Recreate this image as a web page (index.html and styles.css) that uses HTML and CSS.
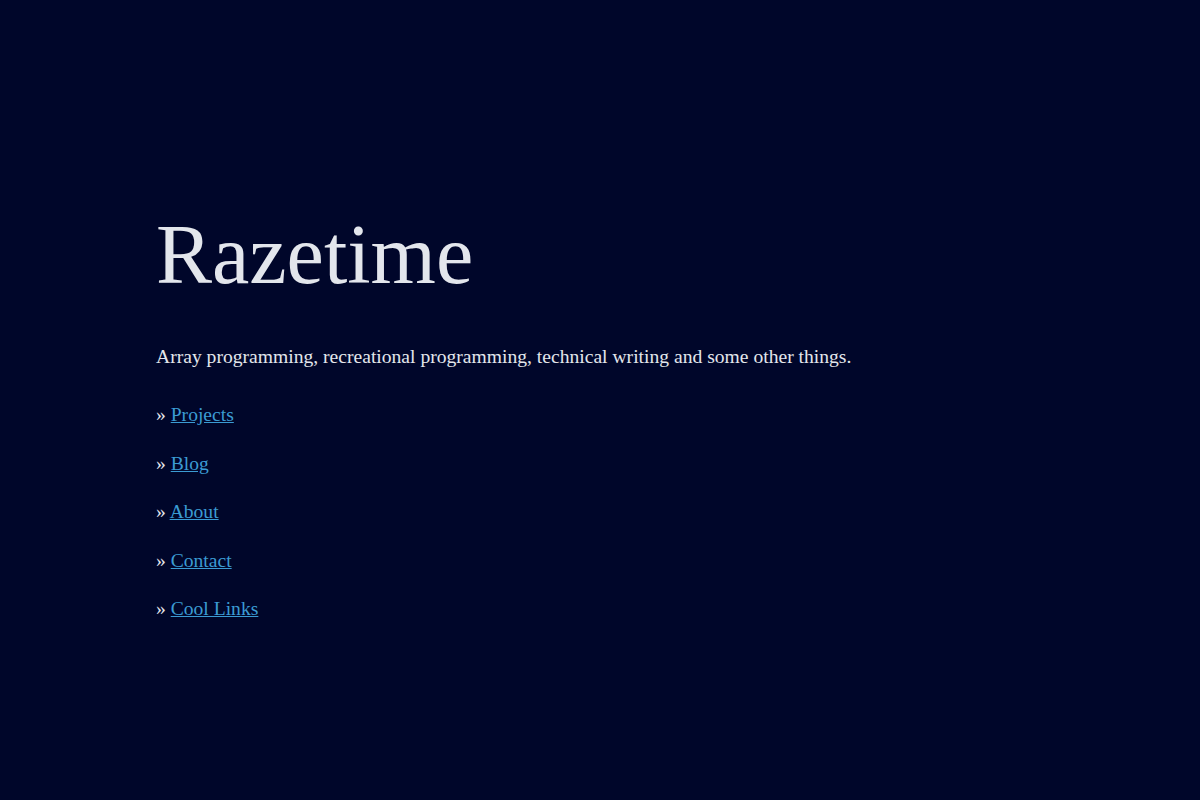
FILE: index.html
```html
<!DOCTYPE html>
<html lang="en">
<head>
<meta charset="utf-8">
<title>Razetime</title>
<link rel="stylesheet" href="styles.css">
</head>
<body>
<main class="page">
  <h1 class="title">Razetime</h1>
  <p class="tagline">Array programming, recreational programming, technical writing and some other things.</p>
  <ul class="nav">
    <li>» <a href="#">Projects</a></li>
    <li>» <a href="#">Blog</a></li>
    <li>» <a href="#">About</a></li>
    <li>» <a href="#">Contact</a></li>
    <li>» <a href="#">Cool Links</a></li>
  </ul>
</main>
</body>
</html>
```
FILE: styles.css
```css
html, body {
  margin: 0;
  padding: 0;
  background: #00062a;
  height: 100%;
}
body {
  font-family: "Liberation Serif", "DejaVu Serif", serif;
  color: #e3e6ec;
}
.page {
  padding: 200px 0 0 156px;
}
.title {
  font-size: 84px;
  font-weight: normal;
  margin: 0;
  line-height: 110px;
  color: #e3e6ec;
}
.tagline {
  font-size: 19.6px;
  margin: 33px 0 0 0;
  line-height: 27px;
}
.nav {
  list-style: none;
  margin: 31px 0 0 0;
  padding: 0;
  display: flex;
  flex-direction: column;
  gap: 21.5px;
  font-size: 19.6px;
  line-height: 27px;
}
.nav a {
  color: #3b9bd3;
  text-decoration: underline;
}
```
